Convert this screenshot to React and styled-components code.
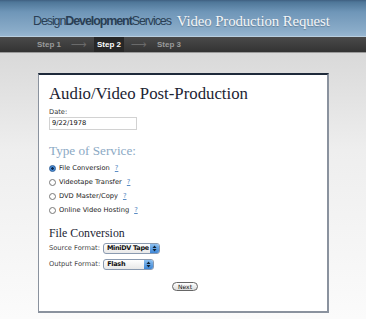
import React from 'react';
import styled, { createGlobalStyle } from 'styled-components';

const GlobalStyle = createGlobalStyle`
  html, body { margin: 0; padding: 0; }
  body {
    width: 366px;
    height: 319px;
    overflow: hidden;
    background: linear-gradient(to bottom, #d9d9d9 52px, #eeeeee 150px, #fbfbfb 319px);
    font-family: "DejaVu Sans", Verdana, sans-serif;
  }
`;

const Header = styled.header`
  height: 37px;
  background: linear-gradient(to bottom, #3f5f80 0px, #4e7698 2px, #6f96b8 12px, #89abc8 30px, #9ab8d2 37px);
  border-bottom: 1px solid #b9cfe0;
  box-sizing: border-box;
  display: flex;
  align-items: center;
  padding: 6px 0 0 33px;
  gap: 6px;
  white-space: nowrap;
`;

const Brand = styled.div`
  font-family: "Liberation Sans", Arial, sans-serif;
  font-size: 12.5px;
  letter-spacing: -1.1px;
  color: #2a3f55;
  b { font-weight: bold; }
`;

const Title = styled.div`
  font-family: "Liberation Serif", "Times New Roman", serif;
  font-size: 14.8px;
  letter-spacing: -0.1px;
  color: #f4f6f8;
  text-shadow: 0 1px 1px rgba(0,0,0,0.25);
`;

const StepBar = styled.nav`
  height: 15px;
  background: linear-gradient(to bottom, #4a4a4a, #333333);
  border-bottom: 1px solid #9a9a9a;
  display: flex;
  align-items: stretch;
  padding-left: 34px;
`;

const Step = styled.div`
  font-family: "Liberation Sans", Arial, sans-serif;
  font-size: 8px;
  font-weight: bold;
  width: 30px;
  justify-content: center;
  color: ${p => (p.active ? '#ffffff' : '#9a9a9a')};
  background: ${p => (p.active ? '#272727' : 'transparent')};
  display: flex;
  align-items: center;
`;

const Arrow = styled.div`
  color: #6a6a6a;
  font-size: 11px;
  width: 30px;
  display: flex;
  align-items: center;
  justify-content: center;
`;

const Main = styled.main`
  padding: 20px 0 0 38px;
`;

const Card = styled.section`
  width: 291px;
  height: 240px;
  box-sizing: border-box;
  background: #ffffff;
  border: 1px solid #8a929e;
  border-top: 2px solid #1e2a3a;
  border-right-width: 2px;
  border-bottom-width: 2px;
  padding: 9px 10px 0 10px;
  display: flex;
  flex-direction: column;
`;

const H1 = styled.h1`
  margin: 0;
  font-family: "Liberation Serif", "Times New Roman", serif;
  font-weight: normal;
  font-size: 16.8px;
  color: #1c2433;
  line-height: 20px;
`;

const Label = styled.div`
  font-size: 6.7px;
  color: #333;
  margin-top: 4px;
  line-height: 9px;
`;

const TextInput = styled.div`
  width: 84px;
  height: 11px;
  border: 1px solid #d2d2d2;
  font-size: 6.7px;
  color: #111;
  padding-left: 2px;
  line-height: 11px;
`;

const H2 = styled.h2`
  margin: 14px 0 3px;
  font-family: "Liberation Serif", "Times New Roman", serif;
  font-weight: normal;
  font-size: 13.2px;
  color: #8ba9c4;
  line-height: 14px;
`;

const RadioRow = styled.label`
  display: flex;
  align-items: center;
  gap: 3px;
  height: 14px;
  font-size: 6.7px;
  color: #222;
`;

const Radio = styled.span`
  width: 5px;
  height: 5px;
  border-radius: 50%;
  border: 1px solid #777;
  background: ${p => (p.checked ? 'radial-gradient(circle, #0b2b55 0 1.2px, #4b8fd8 1.5px)' : '#fff')};
  border-color: ${p => (p.checked ? '#2a5c99' : '#777')};
`;

const Help = styled.a`
  color: #5b8cc4;
  text-decoration: underline;
  margin-left: 2px;
`;

const H3 = styled.h3`
  margin: 9px 0 0;
  font-family: "Liberation Serif", "Times New Roman", serif;
  font-weight: normal;
  font-size: 11.8px;
  color: #1c2433;
  line-height: 14px;
`;

const FieldRow = styled.div`
  display: flex;
  align-items: center;
  gap: 3px;
  height: 16px;
  font-size: 6.7px;
  color: #444;
`;

const Select = styled.div`
  width: ${p => p.w}px;
  height: 11px;
  border: 1px solid #8a9ab0;
  border-radius: 3px;
  background: linear-gradient(to bottom, #ffffff, #e8e8e8);
  display: flex;
  align-items: center;
  font-size: 6.5px;
  font-weight: bold;
  color: #111;
  box-sizing: border-box;
  padding-left: 3px;
  overflow: hidden;
  white-space: nowrap;
`;

const SelectText = styled.span`
  flex: 1;
  letter-spacing: -0.3px;
`;

const SelectKnob = styled.span`
  width: 9px;
  height: 100%;
  background: linear-gradient(to bottom, #8cc0f0, #3e86d6);
  display: flex;
  align-items: center;
  justify-content: center;
`;

const Footer = styled.div`
  display: flex;
  justify-content: center;
  margin-top: 10px;
  padding-left: 4px;
`;

const Button = styled.button`
  font-family: "DejaVu Sans", Verdana, sans-serif;
  font-size: 6px;
  height: 9px;
  padding: 0 5px;
  border: 1px solid #666;
  border-radius: 5px;
  background: linear-gradient(to bottom, #ffffff, #dcdcdc);
  color: #111;
  line-height: 7px;
`;

const Updown = () => (
  <svg width="5" height="7" viewBox="0 0 5 7">
    <path d="M0.5 3 L2.5 0.5 L4.5 3 Z" fill="#102030" />
    <path d="M0.5 4 L2.5 6.5 L4.5 4 Z" fill="#102030" />
  </svg>
);

const services = [
  { name: 'File Conversion', checked: true },
  { name: 'Videotape Transfer' },
  { name: 'DVD Master/Copy' },
  { name: 'Online Video Hosting' },
];

export default function App() {
  return (
    <>
      <GlobalStyle />
      <Header>
        <Brand>Design<b>Development</b>Services</Brand>
        <Title>Video Production Request</Title>
      </Header>
      <StepBar>
        <Step>Step 1</Step>
        <Arrow>⟶</Arrow>
        <Step active>Step 2</Step>
        <Arrow>⟶</Arrow>
        <Step>Step 3</Step>
      </StepBar>
      <Main>
        <Card>
          <H1>Audio/Video Post-Production</H1>
          <Label>Date:</Label>
          <TextInput>9/22/1978</TextInput>
          <H2>Type of Service:</H2>
          {services.map(s => (
            <RadioRow key={s.name}>
              <Radio checked={s.checked} />
              {s.name} <Help>?</Help>
            </RadioRow>
          ))}
          <H3>File Conversion</H3>
          <FieldRow>
            Source Format:
            <Select w={57}><SelectText>MiniDV Tape</SelectText><SelectKnob><Updown /></SelectKnob></Select>
          </FieldRow>
          <FieldRow>
            Output Format:
            <Select w={51}><SelectText>Flash</SelectText><SelectKnob><Updown /></SelectKnob></Select>
          </FieldRow>
          <Footer>
            <Button>Next</Button>
          </Footer>
        </Card>
      </Main>
    </>
  );
}
